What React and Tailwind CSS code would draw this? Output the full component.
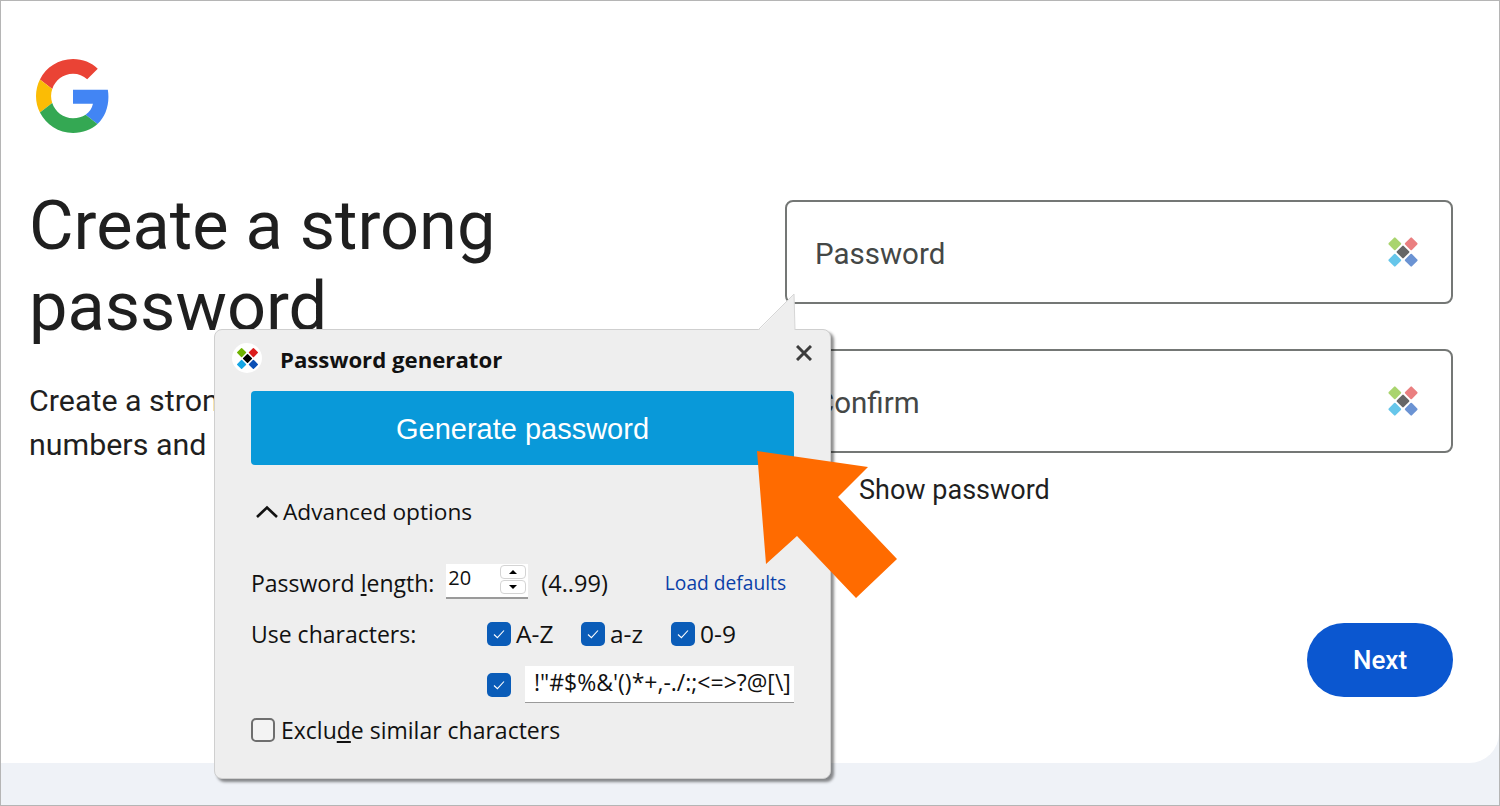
import React from "react";

function GoogleLogo() {
  return (
    <svg viewBox="0 0 48 48" className="w-[74px] h-[74px]">
      <path fill="#EA4335" d="M24 9.5c3.54 0 6.71 1.22 9.21 3.6l6.85-6.85C35.9 2.38 30.47 0 24 0 14.62 0 6.51 5.38 2.56 13.22l7.98 6.19C12.43 13.72 17.74 9.5 24 9.5z" />
      <path fill="#4285F4" d="M46.98 24.55c0-1.57-.15-3.09-.38-4.55H24v9.02h12.94c-.58 2.96-2.26 5.48-4.78 7.18l7.73 6c4.51-4.18 7.09-10.36 7.09-17.65z" />
      <path fill="#FBBC05" d="M10.53 28.59c-.48-1.45-.76-2.99-.76-4.59s.27-3.14.76-4.59l-7.98-6.19C.92 16.46 0 20.12 0 24c0 3.88.92 7.54 2.56 10.78l7.97-6.19z" />
      <path fill="#34A853" d="M24 48c6.48 0 11.93-2.13 15.89-5.81l-7.73-6c-2.15 1.45-4.92 2.3-8.16 2.3-6.26 0-11.57-4.22-13.47-9.91l-7.98 6.19C6.51 42.62 14.62 48 24 48z" />
    </svg>
  );
}

// the four coloured diamonds, faded inside the fields
function KeeIcon({ colors, size }) {
  return (
    <svg viewBox="0 0 32 32" width={size} height={size}>
      <rect x="3" y="3" width="9.6" height="9.6" rx="1" transform="rotate(45 7.8 7.8)" fill={colors[0]} />
      <rect x="19.4" y="3" width="9.6" height="9.6" rx="1" transform="rotate(45 24.2 7.8)" fill={colors[1]} />
      <rect x="3" y="19.4" width="9.6" height="9.6" rx="1" transform="rotate(45 7.8 24.2)" fill={colors[2]} />
      <rect x="19.4" y="19.4" width="9.6" height="9.6" rx="1" transform="rotate(45 24.2 24.2)" fill={colors[3]} />
      <rect x="11.2" y="11.2" width="9.6" height="9.6" rx="1" transform="rotate(45 16 16)" fill={colors[4]} />
    </svg>
  );
}

const fadedColors = ["#a9d46e", "#ea7f80", "#66c6ea", "#6b93d3", "#666666"];
const solidColors = ["#6fb300", "#dc1c1c", "#14a5e4", "#0a4fb5", "#000000"];

function Field({ label }) {
  return (
    <div className="h-[104px] w-[668px] rounded-lg border-2 border-[#747775] flex items-center justify-between pl-[28px] pr-[32px]">
      <span className="text-[29.5px] text-[#444746] mt-[4px]">{label}</span>
      <KeeIcon colors={fadedColors} size={32} />
    </div>
  );
}

function Check({ checked }) {
  if (!checked) {
    return <span className="w-[24px] h-[24px] rounded-[5px] border-2 border-[#6e6e6e] bg-[#f3f3f3] shrink-0" />;
  }
  return (
    <span className="w-[24px] h-[24px] rounded-[5px] bg-[#0a5cb8] flex items-center justify-center shrink-0">
      <svg viewBox="0 0 14 14" className="w-[14px] h-[14px]" fill="none" stroke="#ffffff" strokeWidth="1.1">
        <path d="M2 7.5l3.4 3.2L12 3.5" />
      </svg>
    </span>
  );
}

function Spinner() {
  return (
    <div className="flex flex-col gap-[1px] mt-[1px]">
      <div className="w-[26px] h-[14px] rounded-[4px] border border-[#d4d4d4] bg-white flex items-center justify-center">
        <span className="w-0 h-0 border-x-[4px] border-x-transparent border-b-[4px] border-b-black" />
      </div>
      <div className="w-[26px] h-[14px] rounded-[4px] border border-[#d4d4d4] bg-white flex items-center justify-center">
        <span className="w-0 h-0 border-x-[4px] border-x-transparent border-t-[4px] border-t-black" />
      </div>
    </div>
  );
}

function GeneratorPopup() {
  return (
    <div className="absolute left-[213px] top-[328px] w-[617px] h-[450px] rounded-lg bg-[#eeeeee] border border-[#cfcfcf] shadow-[3px_3px_3px_rgba(0,0,0,0.45)] font-['Open_Sans',sans-serif] text-[#111111]">
      {/* pointer towards the field */}
      <svg className="absolute left-[542px] top-[-37px]" width="40" height="38" viewBox="0 0 40 38">
        <path d="M1 38L37 1l1 37z" fill="#eeeeee" />
        <path d="M1 37L37 1l1 36" fill="none" stroke="#d6d6d6" />
      </svg>

      <div className="flex items-center h-[60px] pl-[17px] pr-[18px]">
        <div className="w-[30px] h-[30px] mt-[-4px] rounded-full bg-white flex items-center justify-center">
          <KeeIcon colors={solidColors} size={23} />
        </div>
        <span className="ml-[18px] text-[22.2px] font-bold">Password generator</span>
        <svg viewBox="0 0 16 16" className="ml-auto mt-[-14px] w-[16px] h-[16px]" fill="none" stroke="#3c3c3c" strokeWidth="3">
          <path d="M1 1l14 14M15 1L1 15" />
        </svg>
      </div>

      <div className="ml-[36px] w-[543px] h-[74px] mt-[1px] pt-[3px] rounded-[4px] bg-[#0999d9] flex items-center justify-center font-['Liberation_Sans',sans-serif] text-[29px] text-white">
        Generate password
      </div>

      <div className="ml-[40px] mt-[31px] flex items-center h-[32px]">
        <svg viewBox="0 0 24 14" className="w-[24px] h-[14px]" fill="none" stroke="#111111" strokeWidth="2.6">
          <path d="M2 12L12 2.5 22 12" />
        </svg>
        <span className="ml-[4px] text-[22.7px]">Advanced options</span>
      </div>

      <div className="ml-[36px] mt-[36px] flex items-start h-[36px]">
        <span className="text-[23px] mt-[1px] leading-[36px]">Password <span className="underline">l</span>ength:</span>
        <div className="ml-[12px] w-[82px] h-[35px] bg-white border-b-2 border-[#9a9a9a] flex justify-between pl-[2px] pr-[2px]">
          <span className="text-[20px] leading-[27px]">20</span>
          <Spinner />
        </div>
        <span className="ml-[13px] text-[23.5px] leading-[36px] mt-[1px]">(4..99)</span>
        <span className="ml-[57px] text-[19.2px] leading-[36px] mt-[1px] text-[#0a3fa8]">Load defaults</span>
      </div>

      <div className="ml-[36px] mt-[18px] flex items-center h-[32px]">
        <span className="w-[236px] text-[23px]">Use characters:</span>
        <Check checked />
        <span className="ml-[5px] w-[65px] text-[24.5px]">A-Z</span>
        <Check checked />
        <span className="ml-[5px] w-[61px] text-[24.5px]">a-z</span>
        <Check checked />
        <span className="ml-[5px] text-[24.5px]">0-9</span>
      </div>

      <div className="ml-[272px] mt-[16px] flex items-center">
        <Check checked />
        <div className="ml-[14px] w-[269px] h-[37px] bg-white border-b border-[#9a9a9a] pl-[9px] text-[23px] leading-[32px] overflow-hidden whitespace-nowrap">
          !"#$%&amp;'()*+,-./:;&lt;=&gt;?@[\]
        </div>
      </div>

      <div className="ml-[36px] mt-[11px] flex items-center h-[32px]">
        <Check />
        <span className="ml-[6px] text-[23px]">Exclu<span className="underline">d</span>e similar characters</span>
      </div>
    </div>
  );
}

export default function App() {
  return (
    <div className="relative w-[1500px] h-[806px] border border-[#b5b5b5] bg-[#eff2f7] flex flex-col overflow-hidden font-['Roboto',sans-serif]">
      <main className="h-[762px] bg-white rounded-br-[30px] flex justify-between pl-[28px] pr-[46px]">
        <section className="pt-[58px] w-[700px]">
          <div className="ml-[7px]">
            <GoogleLogo />
          </div>
          <h1 className="mt-[52px] text-[68.5px] leading-[81px] text-[#1f1f1f] whitespace-nowrap">
            Create a strong
            <br />
            password
          </h1>
          <p className="mt-[32px] text-[30.4px] leading-[44px] text-[#1f1f1f] whitespace-nowrap">
            Create a strong password with a mix of letters,
            <br />
            numbers and&nbsp; symbols
          </p>
        </section>

        <section className="pt-[199px] w-[668px] flex flex-col">
          <Field label="Password" />
          <div className="mt-[45px]">
            <Field label="Confirm" />
          </div>
          <div className="mt-[19px] ml-[74px] text-[27px] leading-[36px] text-[#1f1f1f]">Show password</div>
          <div className="mt-[115px] self-end w-[146px] h-[74px] rounded-full bg-[#0b57d0] flex items-center justify-center text-white text-[26px] font-medium">
            Next
          </div>
        </section>
      </main>

      <GeneratorPopup />

      {/* big orange call-out arrow */}
      <svg className="absolute left-[-1px] top-[-1px] pointer-events-none" width="1500" height="806">
        <path d="M757 451L868 467L838 497L897 559L856 598L797 536L766 564Z" fill="#ff6b00" />
      </svg>
    </div>
  );
}
